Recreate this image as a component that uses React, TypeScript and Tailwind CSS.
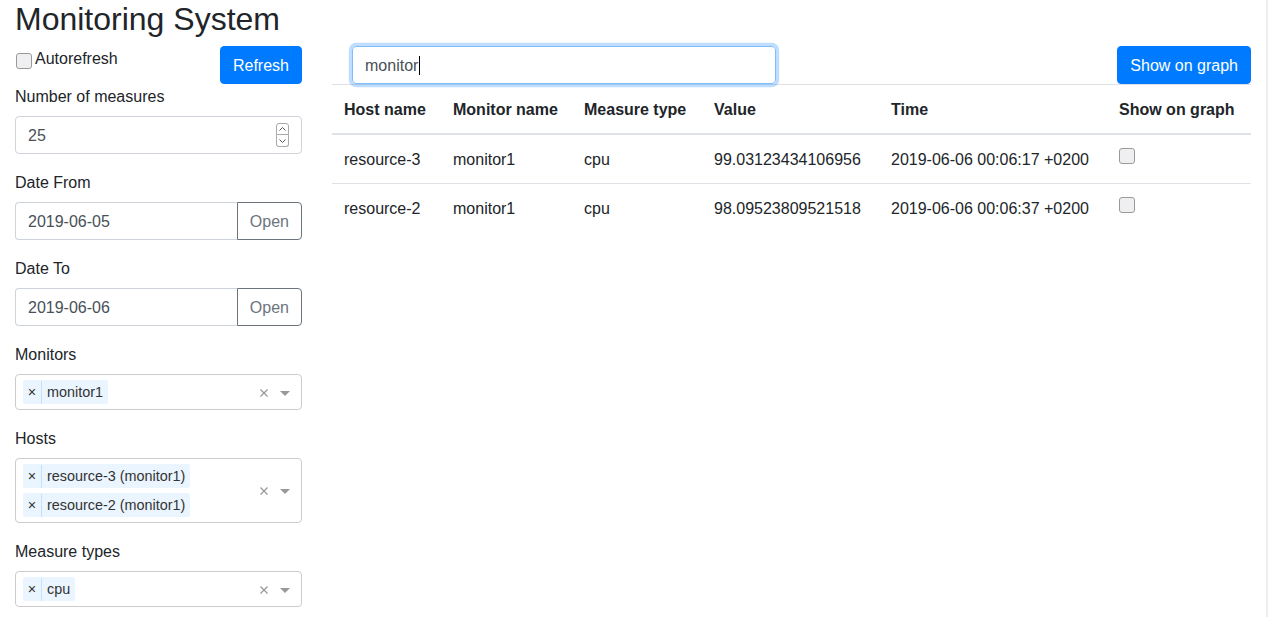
import React from "react";

const rows = [
  { host: "resource-3", monitor: "monitor1", type: "cpu", value: "99.03123434106956", time: "2019-06-06 00:06:17 +0200" },
  { host: "resource-2", monitor: "monitor1", type: "cpu", value: "98.09523809521518", time: "2019-06-06 00:06:37 +0200" },
];

function Checkbox() {
  return <span className="block h-[16px] w-[16px] rounded-[3px] border border-[#9a9a9a] bg-[#efeff1]" />;
}

function Chip({ label }: { label: string }) {
  return (
    <div className="flex h-[24px] items-center rounded-[2px] bg-[#ebf5ff] pt-px text-[14.4px] text-[#333]">
      <span className="flex h-full w-[19px] items-center justify-center border-r border-[#c2e0ff]">×</span>
      <span className="px-[5px]">{label}</span>
    </div>
  );
}

function MultiSelect({ values }: { values: string[] }) {
  return (
    <div className="flex items-center rounded border border-[#ccc] bg-white">
      <div className="flex flex-1 flex-col items-start gap-[5px] py-[5px] pl-[7px]">
        {values.map((v) => (
          <Chip key={v} label={v} />
        ))}
      </div>
      <svg width="8" height="8" viewBox="0 0 8 8" className="mr-[12px] mt-px">
        <path d="M0.5 0.5L7.5 7.5M7.5 0.5L0.5 7.5" stroke="#999" strokeWidth="1.3" />
      </svg>
      <span className="mr-[11px] mt-[2px] h-0 w-0 border-x-[5px] border-t-[5px] border-x-transparent border-t-[#999]" />
    </div>
  );
}

function Field({ label, children }: { label: string; children: React.ReactNode }) {
  return (
    <div className="mb-4">
      <div className="mb-2 h-6 pt-px leading-[23px]">{label}</div>
      {children}
    </div>
  );
}

function DateInput({ value }: { value: string }) {
  return (
    <div className="flex h-[38px]">
      <div className="flex flex-1 items-center rounded-l border border-r-0 border-[#ced4da] px-3 pt-px text-[#495057]">{value}</div>
      <button className="rounded-r border border-[#6c757d] px-3 pt-px text-[#6c757d]">Open</button>
    </div>
  );
}

export default function App() {
  return (
    <div className="flex min-h-screen w-full bg-white font-['Liberation_Sans',Arial,sans-serif] text-[16px] text-[#212529]">
      <div className="w-[1266px]">
        <h2 className="mb-2 h-[38px] px-[15px] text-[32px] leading-[1.2]">Monitoring System</h2>
        <div className="flex">
          {/* Filters */}
          <div className="w-[317px] px-[15px]">
            <div className="flex items-start justify-between">
              <label className="flex h-6 items-center pt-px leading-[23px]">
                <span className="ml-[1px] mr-[3px] mt-[5px]">
                  <Checkbox />
                </span>
                Autorefresh
              </label>
              <button className="h-[38px] rounded border border-[#007bff] bg-[#007bff] px-3 pt-px text-white">Refresh</button>
            </div>
            <Field label="Number of measures">
              <div className="flex h-[38px] items-center rounded border border-[#ced4da] px-3 text-[#495057]">
                <span className="flex-1 pt-px">25</span>
                <div className="flex flex-col">
                  <span className="flex h-[12px] w-[13px] items-center justify-center rounded-t-[3px] border border-[#aaa]">
                    <svg width="7" height="4" viewBox="0 0 7 4">
                      <path d="M0.5 3.5L3.5 0.5L6.5 3.5" stroke="#555" fill="none" />
                    </svg>
                  </span>
                  <span className="flex h-[12px] w-[13px] items-center justify-center rounded-b-[3px] border border-t-0 border-[#aaa]">
                    <svg width="7" height="4" viewBox="0 0 7 4">
                      <path d="M0.5 0.5L3.5 3.5L6.5 0.5" stroke="#555" fill="none" />
                    </svg>
                  </span>
                </div>
              </div>
            </Field>
            <Field label="Date From">
              <DateInput value="2019-06-05" />
            </Field>
            <Field label="Date To">
              <DateInput value="2019-06-06" />
            </Field>
            <Field label="Monitors">
              <MultiSelect values={["monitor1"]} />
            </Field>
            <Field label="Hosts">
              <MultiSelect values={["resource-3 (monitor1)", "resource-2 (monitor1)"]} />
            </Field>
            <Field label="Measure types">
              <MultiSelect values={["cpu"]} />
            </Field>
          </div>

          {/* Results */}
          <div className="flex-1 px-[15px]">
            <div className="flex h-[38px] items-start justify-between">
              <div className="ml-[20px] flex h-[38px] w-[424px] items-center rounded border border-[#80bdff] px-3 pt-px text-[#495057] shadow-[0_0_0_0.2rem_rgba(0,123,255,0.25)]">
                monitor
                <span className="ml-[1px] inline-block h-[19px] w-px bg-black" />
              </div>
              <button className="h-[38px] rounded border border-[#007bff] bg-[#007bff] px-3 pt-px text-white">Show on graph</button>
            </div>
            <table className="w-full table-fixed border-collapse">
              <colgroup>
                <col className="w-[109px]" />
                <col className="w-[131px]" />
                <col className="w-[130px]" />
                <col className="w-[177px]" />
                <col className="w-[228px]" />
                <col className="w-[144px]" />
              </colgroup>
              <thead>
                <tr>
                  {["Host name", "Monitor name", "Measure type", "Value", "Time", "Show on graph"].map((h) => (
                    <th key={h} className="whitespace-nowrap border-t border-b-2 border-[#dee2e6] px-3 pt-[13px] pb-[11px] text-left align-bottom font-bold leading-6">
                      {h}
                    </th>
                  ))}
                </tr>
              </thead>
              <tbody>
                {rows.map((r) => (
                  <tr key={r.host}>
                    <td className="whitespace-nowrap border-t border-[#dee2e6] px-3 pt-[13px] pb-[11px] align-top leading-6">{r.host}</td>
                    <td className="whitespace-nowrap border-t border-[#dee2e6] px-3 pt-[13px] pb-[11px] align-top leading-6">{r.monitor}</td>
                    <td className="whitespace-nowrap border-t border-[#dee2e6] px-3 pt-[13px] pb-[11px] align-top leading-6">{r.type}</td>
                    <td className="whitespace-nowrap border-t border-[#dee2e6] px-3 pt-[13px] pb-[11px] align-top leading-6">{r.value}</td>
                    <td className="whitespace-nowrap border-t border-[#dee2e6] px-3 pt-[13px] pb-[11px] align-top leading-6">{r.time}</td>
                    <td className="border-t border-[#dee2e6] p-3 align-top leading-6">
                      <div className="h-6 pt-[1px]">
                        <Checkbox />
                      </div>
                    </td>
                  </tr>
                ))}
              </tbody>
            </table>
          </div>
        </div>
      </div>
      <div className="w-[2px] self-stretch bg-[#eeeeee]" />
    </div>
  );
}
